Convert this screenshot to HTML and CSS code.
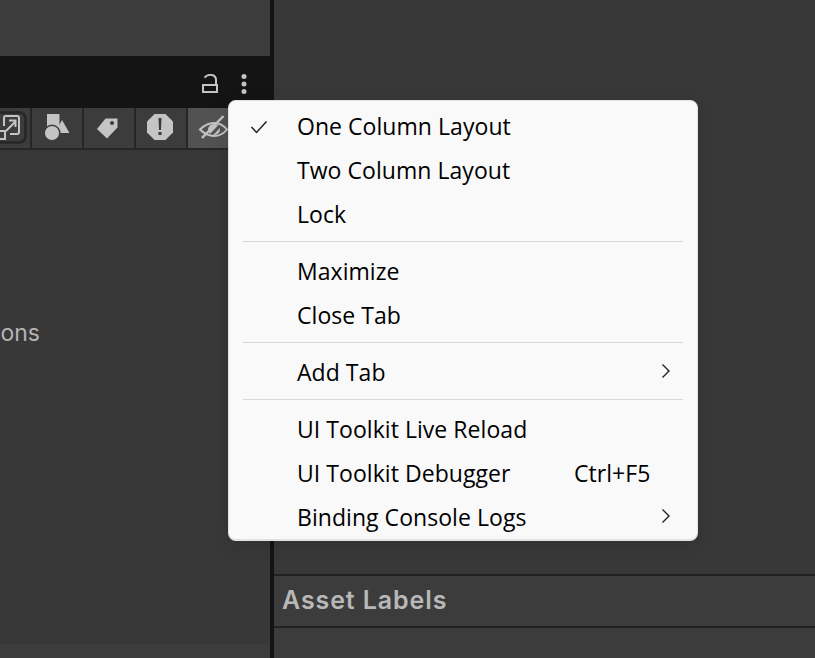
FILE: index.html
```html
<!DOCTYPE html>
<html lang="en">
<head>
<meta charset="utf-8">
<title>Inspector menu</title>
<link rel="stylesheet" href="styles.css">
</head>
<body>
<div class="app">
  <section class="left">
    <div class="left-top"></div>
    <div class="tabbar">
      <svg class="lock" width="18" height="20" viewBox="0 0 18 20"><path d="M3.500 3.600C5.500 1.400 8.500 0.600 11 1C13.500 1.600 15 3.500 15 6V11" fill="none" stroke="#c4c4c4" stroke-width="2"/><rect x="2" y="11" width="14" height="7" fill="none" stroke="#c4c4c4" stroke-width="2"/></svg>
      <svg class="dots" width="8" height="20" viewBox="0 0 8 20"><circle cx="4" cy="2.500" r="2.500" fill="#c4c4c4"/><circle cx="4" cy="10" r="2.500" fill="#c4c4c4"/><circle cx="4" cy="17.500" r="2.500" fill="#c4c4c4"/></svg>
    </div>
    <div class="toolbar">
      <div class="tool first">
        <svg width="30" height="40" viewBox="0 0 30 40"><rect x="-6" y="4.500" width="31.500" height="30" rx="6" fill="none" stroke="#262626" stroke-width="2.500"/><path d="M4 10a2 2 0 0 1 2-2h11a2 2 0 0 1 2 2v14a2 2 0 0 1-2 2h-7" fill="none" stroke="#c4c4c4" stroke-width="2"/><path d="M4 10v8M6 23l9-9M9 12.500h6.500V19" fill="none" stroke="#c4c4c4" stroke-width="2"/><rect x="-3" y="23" width="8" height="8" fill="#3c3c3c" stroke="#c4c4c4" stroke-width="2"/></svg>
      </div>
      <div class="tool">
        <svg width="50" height="40" viewBox="0 0 50 40"><rect x="15" y="6" width="12.500" height="13" fill="#c4c4c4"/><path d="M30 12l7.500 13H23z" fill="#c4c4c4"/><circle cx="20" cy="25" r="7.800" fill="#c4c4c4" stroke="#3c3c3c" stroke-width="1.500"/></svg>
      </div>
      <div class="tool">
        <svg width="50" height="40" viewBox="0 0 50 40"><path d="M13 21L21.500 10.500H33.500V19.500L23 30.500z" fill="#c4c4c4"/><circle cx="28" cy="15" r="2" fill="#3c3c3c"/></svg>
      </div>
      <div class="tool">
        <svg width="50" height="40" viewBox="0 0 50 40"><path d="M18.500 6h11l7.500 7.500v11L29.500 32h-11L11 24.500v-11z" fill="#c4c4c4"/><path d="M22.500 10h3l-.5 12h-2zM22.400 24h3.200v3h-3.200z" fill="#3c3c3c"/></svg>
      </div>
      <div class="tool active">
        <svg width="50" height="40" viewBox="0 0 50 40"><path d="M12 21.500C17 16.500 21 15 26 15s9 1.500 13 6.500C35 26.500 31 28 26 28s-9-1.500-14-6.500z" fill="none" stroke="#c4c4c4" stroke-width="2"/><path d="M20 22a6 6 0 0 1 10-4.500L22 26z" fill="#c4c4c4"/><path d="M26 27a6 6 0 0 0 6-7l-7 7z" fill="#c4c4c4"/><path d="M14 30L35.500 8" stroke="#c4c4c4" stroke-width="2.500"/></svg>
      </div>
    </div>
    <div class="left-body"><p class="cut">ons</p></div>
    <div class="left-foot"></div>
  </section>
  <div class="divider"></div>
  <section class="right">
    <div class="right-body"></div>
    <div class="labels">Asset Labels</div>
    <div class="right-foot"></div>
  </section>
</div>
<div class="menu">
  <div class="item"><svg class="check" width="18" height="14" viewBox="0 0 18 14"><path d="M1.500 7l5 5.500L16.500 1.500" fill="none" stroke="#222" stroke-width="1.500"/></svg><span>One Column Layout</span></div>
  <div class="item"><span>Two Column Layout</span></div>
  <div class="item"><span>Lock</span></div>
  <div class="sep"></div>
  <div class="item"><span>Maximize</span></div>
  <div class="item"><span>Close Tab</span></div>
  <div class="sep"></div>
  <div class="item"><span>Add Tab</span><svg class="chev" width="10" height="16" viewBox="0 0 10 16"><path d="M1.500 1.500L8 8l-6.500 6.500" fill="none" stroke="#222" stroke-width="1.400"/></svg></div>
  <div class="sep"></div>
  <div class="item"><span>UI Toolkit Live Reload</span></div>
  <div class="item"><span>UI Toolkit Debugger</span><span class="key">Ctrl+F5</span></div>
  <div class="item"><span>Binding Console Logs</span><svg class="chev" width="10" height="16" viewBox="0 0 10 16"><path d="M1.500 1.500L8 8l-6.500 6.500" fill="none" stroke="#222" stroke-width="1.400"/></svg></div>
</div>
</body>
</html>
```
FILE: styles.css
```css
* { box-sizing: border-box; }
html, body { margin: 0; height: 100%; overflow: hidden; background: #383838; }
.app { display: flex; width: 815px; height: 658px; }
.left { width: 270px; display: flex; flex-direction: column; flex: none; background: #383838; }
.left-top { height: 56px; background: #3c3c3c; }
.tabbar { height: 52px; width: 274px; background: #141414; display: flex; align-items: center; justify-content: flex-end; gap: 21px; padding: 4px 26px 0 0; flex: none; }
.toolbar { height: 42px; display: flex; justify-content: flex-end; gap: 2px; background: #262626; padding-bottom: 2px; flex: none; width: 270px; }
.tool { width: 50px; background: #3c3c3c; display: flex; overflow: hidden; }
.tool.first { width: 30px; }
.tool.active { background: #525252; width: 82px; }
.left-body { flex: 1; background: #383838; position: relative; }
.cut { margin: 0; position: absolute; right: 230px; top: 168px; font: 23px/30px "Inter", sans-serif; color: #b4b4b4; }
.left-foot { height: 14px; background: #3c3c3c; flex: none; }
.divider { width: 4px; flex: none; background: #141414; }
.right { flex: 1; display: flex; flex-direction: column; background: #383838; }
.right-body { height: 576px; flex: none; border-bottom: 2px solid #212121; }
.labels { height: 52px; flex: none; background: #3c3c3c; border-bottom: 2px solid #212121; padding: 9px 0 0 8px; font: 600 25px/30px "Inter", sans-serif; letter-spacing: .9px; color: #b8b8b8; }
.right-foot { flex: 1; background: #3c3c3c; }
.menu { position: absolute; left: 228px; top: 100px; width: 470px; height: 441px; background: #f9f9f9; border: 1px solid #e2e2e2; border-bottom-width: 2px; border-radius: 8px; padding: 4px 14px 0 14px; box-shadow: 0 4px 20px rgba(0,0,0,.12); font: 23px/43px "Open Sans", sans-serif; letter-spacing: .05px; color: #000; }
.item { height: 44px; position: relative; padding-left: 54px; display: flex; white-space: nowrap; }
.sep { height: 1px; background: #d8d8d8; margin: 4px 0 8px; }
.check { position: absolute; left: 7px; top: 15px; }
.chev { position: absolute; right: 12px; top: 12px; }
.key { position: absolute; left: 331px; }
```
